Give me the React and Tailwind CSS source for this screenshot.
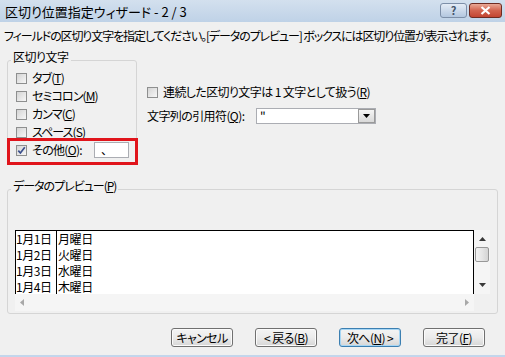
import React from 'react'

const font = "font-['Noto_Sans_CJK_JP',sans-serif] [font-feature-settings:'palt']"

function Box({ checked }) {
  return (
    <span className="flex h-[11px] w-[11px] shrink-0 items-center justify-center border border-[#8e8f8f] bg-white">
      <span className="flex h-[9px] w-[9px] items-center justify-center bg-linear-to-br from-[#d4d4d4] to-[#f7f7f7]">
        {checked && (
          <svg width="9" height="9" viewBox="0 0 9 9">
            <path d="M1.3 4.6 L3.4 7 L7.8 1.2" fill="none" stroke="#3b4f8c" strokeWidth="1.7" />
          </svg>
        )}
      </span>
    </span>
  )
}

function Key({ k }) {
  return <>(<span className="underline underline-offset-1">{k}</span>)</>
}

function Btn({ children, primary }) {
  return (
    <div
      className={`flex h-[19px] w-[62px] items-center justify-center rounded-[3px] border bg-linear-to-b from-[#f4f4f4] via-[#ebebeb] to-[#d6d6d6] text-[12px] leading-none tracking-[-0.6px] whitespace-nowrap ${
        primary ? 'border-[#3c7fb1] shadow-[inset_0_0_0_1px_#a6d6f5]' : 'border-[#707070] shadow-[inset_0_0_0_1px_#fbfbfb]'
      }`}
    >
      {children}
    </div>
  )
}

const rows = [
  ['1月1日', '月曜日'],
  ['1月2日', '火曜日'],
  ['1月3日', '水曜日'],
  ['1月4日', '木曜日'],
]

export default function App() {
  return (
    <div className={`flex h-[357px] w-[505px] flex-col overflow-hidden bg-[#f0f0f0] text-black ${font}`}>
      {/* title bar */}
      <div className="flex h-[22px] items-center bg-linear-to-b from-[#d3e0ee] to-[#bfd2e7] pl-[5px] pr-[3px]">
        <span className="text-[13px] leading-none">区切り位置指定ウィザード - 2 / 3</span>
        <div className="ml-auto flex items-start gap-[2px] self-start pt-[3px]">
          <div className="flex h-[15px] w-[27px] items-center justify-center rounded-[3px] border border-[#7d8fa8] bg-linear-to-b from-[#e4ecf6] to-[#b3c7df] text-[11px] font-bold leading-none text-[#44546b]">
            ?
          </div>
          <div className="flex h-[15px] w-[33px] items-center justify-center rounded-[3px] border border-[#6e2b22] bg-linear-to-b from-[#e9a896] via-[#d2634f] to-[#c24431]">
            <svg width="11" height="9" viewBox="0 0 11 9">
              <path d="M1.5 1 L9.5 8 M9.5 1 L1.5 8" stroke="#fff" strokeWidth="2.2" />
            </svg>
          </div>
        </div>
      </div>

      <div className="mt-[8px] h-[12px] pl-[4px] text-[12px] leading-[12px] tracking-[-1.1px] whitespace-nowrap">
        フィールドの区切り文字を指定してください。[データのプレビュー] ボックスには区切り位置が表示されます。
      </div>

      <div className="mt-[9px] flex">
        <fieldset className="ml-[7px] w-[130px] rounded-[3px] border border-[#d5d5d5] pb-[4px]">
          <legend className="ml-[3px] h-[18px] px-[2px] text-[12px] leading-[12px] tracking-[-0.5px]">区切り文字</legend>
          {[
            ['タブ', 'T'],
            ['セミコロン', 'M'],
            ['カンマ', 'C'],
            ['スペース', 'S'],
          ].map(([t, k]) => (
            <div key={k} className="flex h-[18px] items-center gap-[5px] pl-[8px] text-[12px] leading-none tracking-[-0.9px] whitespace-nowrap">
              <Box />
              <span>
                {t}
                <Key k={k} />
              </span>
            </div>
          ))}
          <div className="relative flex h-[18px] items-center gap-[5px] pl-[8px] text-[12px] leading-none tracking-[-0.7px] whitespace-nowrap">
            <Box checked />
            <span>
              その他
              <Key k="O" />:
            </span>
            <div className="ml-auto mr-[7px] flex h-[16px] w-[35px] items-center border border-[#abadb3] bg-white pl-[6px] text-[12px]">
              、
            </div>
            <div className="absolute -top-[3px] -bottom-[6px] -left-[1px] -right-[2px] border-[3px] border-[#e0141b]"></div>
          </div>
        </fieldset>

        <div className="ml-[10px] flex flex-col">
          <div className="mt-[32px] flex h-[18px] items-center gap-[5px] text-[12px] leading-none tracking-[-0.6px] whitespace-nowrap">
            <Box />
            <span>
              連続した区切り文字は 1 文字として扱う
              <Key k="R" />
            </span>
          </div>
          <div className="mt-[7px] flex h-[16px] items-center text-[12px] leading-none whitespace-nowrap">
            <span className="w-[109px] tracking-[-0.6px]">
              文字列の引用符
              <Key k="Q" />:
            </span>
            <div className="flex h-[16px] w-[120px] border border-[#abadb3] bg-white">
              <span className="flex-1 pl-[3px] pt-[1px] text-[12px] leading-none">"</span>
              <div className="flex w-[17px] items-center justify-center border border-[#9a9a9a] bg-linear-to-b from-[#f5f5f5] to-[#d9d9d9]">
                <svg width="7" height="4" viewBox="0 0 7 4">
                  <path d="M0 0 H7 L3.5 4 Z" fill="#000" />
                </svg>
              </div>
            </div>
          </div>
        </div>
      </div>

      {/* preview */}
      <fieldset className="mt-[16px] ml-[7px] w-[491px] rounded-[3px] border border-[#d5d5d5] pb-[2px]">
        <legend className="ml-[3px] h-[18px] px-[2px] text-[12px] leading-[12px] tracking-[-1px] whitespace-nowrap">
          データのプレビュー
          <Key k="P" />
        </legend>
        <div className="mt-[32px] ml-[7px] flex">
          <div className="flex w-[459px] flex-col">
            <div className="h-[64px] overflow-hidden border-x border-t border-black bg-white">
              {rows.map(([a, b]) => (
                <div key={a} className="flex h-[16px] items-center text-[12px] leading-none tracking-[-0.4px]">
                  <span className="h-[16px] w-[41px] border-r border-black pt-[2px]">{a}</span>
                  <span className="pl-[1px]">{b}</span>
                </div>
              ))}
            </div>
            <div className="flex h-[17px] items-center justify-between bg-[#f5f5f5] px-[5px]">
              <svg width="4" height="7" viewBox="0 0 4 7">
                <path d="M4 0 V7 L0 3.5 Z" fill="#a8a8a8" />
              </svg>
              <svg width="4" height="7" viewBox="0 0 4 7">
                <path d="M0 0 V7 L4 3.5 Z" fill="#a8a8a8" />
              </svg>
            </div>
          </div>
          <div className="flex h-[64px] w-[16px] flex-col items-center bg-[#f5f5f5]">
            <svg className="mt-[7px]" width="7" height="4" viewBox="0 0 7 4">
              <path d="M0 4 H7 L3.5 0 Z" fill="#3a3a3a" />
            </svg>
            <div className="mt-[6px] h-[15px] w-[14px] rounded-[2px] border border-[#989898] bg-linear-to-r from-[#f3f3f3] via-[#e6e6e6] to-[#d4d4d4]"></div>
            <svg className="mt-auto mb-[7px]" width="7" height="4" viewBox="0 0 7 4">
              <path d="M0 0 H7 L3.5 4 Z" fill="#3a3a3a" />
            </svg>
          </div>
        </div>
      </fieldset>

      <div className="mt-[14px] flex justify-end gap-[22px] pr-[20px]">
        <Btn>キャンセル</Btn>
        <Btn>
          &lt; 戻る<Key k="B" />
        </Btn>
        <Btn primary>
          次へ<Key k="N" /> &gt;
        </Btn>
        <Btn>
          完了<Key k="F" />
        </Btn>
      </div>

      <div className="mt-auto h-[2px] bg-[#c3d6ec]"></div>
    </div>
  )
}
